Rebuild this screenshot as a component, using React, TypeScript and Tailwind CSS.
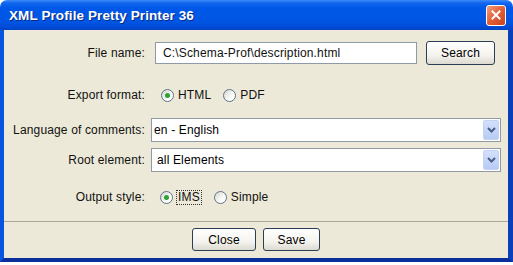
import React from "react";

const font = { fontFamily: '"Liberation Sans", Arial, sans-serif' };

function Radio({ checked }: { checked?: boolean }) {
  return (
    <span className="w-[13px] h-[13px] rounded-full border border-[#5f7489] bg-[linear-gradient(135deg,#d6d6cf,#ffffff_70%)] flex items-center justify-center shrink-0">
      {checked && <span className="w-[5px] h-[5px] rounded-full bg-[#2ea12e]" />}
    </span>
  );
}

function XPButton({ children, w }: { children: React.ReactNode; w: string }) {
  return (
    <div
      className={`${w} h-full rounded-[3px] border border-[#2c3e55] bg-[linear-gradient(to_bottom,#ffffff,#f4f3ee_60%,#dcdad0)] flex items-center justify-center text-[12px] text-black`}
    >
      {children}
    </div>
  );
}

function Combo({ text, pl }: { text: string; pl: string }) {
  return (
    <div className="w-[350px] h-[24px] border border-[#8f9aa6] bg-white flex items-center">
      <span className={`flex-1 ${pl} text-[12px] text-black`}>{text}</span>
      <div className="w-[16px] h-[20px] mr-[1px] rounded-[2px] bg-[linear-gradient(to_bottom,#d3e0fb,#b7cbf5)] border border-[#c4d3f2] flex items-center justify-center">
        <svg width="9" height="6" viewBox="0 0 9 6">
          <path d="M1 1 L4.5 4.5 L8 1" fill="none" stroke="#4a5e86" strokeWidth="2" />
        </svg>
      </div>
    </div>
  );
}

export default function App() {
  return (
    <div className="w-[513px] h-[265px] bg-white" style={font}>
      <div className="w-[513px] h-[262px] flex flex-col">
        {/* Title bar */}
        <div className="h-[30px] rounded-t-[7px] bg-[linear-gradient(to_bottom,#3d8cfa_0px,#1266ee_3px,#0058e8_8px,#0055e3_22px,#004bd6_27px,#0043c4_30px)] flex items-center justify-between pt-[3px] pl-[9px] pr-[7px]">
          <span
            className="text-white font-bold text-[13.5px] tracking-[0.1px]"
            style={{ textShadow: "1px 1px 0 #0a2a80" }}
          >
            XML Profile Pretty Printer 36
          </span>
          <div className="w-[20px] h-[21px] rounded-[3px] border border-white bg-[linear-gradient(135deg,#f0a07f,#e35d35_50%,#c8421e)] flex items-center justify-center mb-[3px]">
            <svg width="10" height="10" viewBox="0 0 10 10">
              <path d="M1.5 1.5 L8.5 8.5 M8.5 1.5 L1.5 8.5" stroke="white" strokeWidth="2" strokeLinecap="square" />
            </svg>
          </div>
        </div>
        {/* Body */}
        <div className="flex-1 flex border-l-[4px] border-r-[5px] border-b-[4px] border-l-[#0a55e0] border-r-[#0a3fb8] border-b-[#0a2f9c] bg-[#ece9d8]">
          <div className="flex-1 flex flex-col text-[12px] text-[#111] tracking-[0.15px]">
            {/* Row 1 */}
            <div className="flex items-center h-[24px] mt-[11px]">
              <span className="w-[141px] text-right">File name:</span>
              <div className="ml-[10px] w-[262px] h-[22px] border border-[#8f9aa6] bg-white flex items-center pl-[7px]">
                C:\Schema-Prof\description.html
              </div>
              <div className="ml-[9px] h-[24px]">
                <XPButton w="w-[69px]">Search</XPButton>
              </div>
            </div>
            {/* Row 2 */}
            <div className="flex items-center h-[24px] mt-[18px]">
              <span className="w-[141px] text-right">Export format:</span>
              <span className="ml-[16px]">
                <Radio checked />
              </span>
              <span className="ml-[4px]">HTML</span>
              <span className="ml-[12px]">
                <Radio />
              </span>
              <span className="ml-[4px]">PDF</span>
            </div>
            {/* Row 3 */}
            <div className="flex items-center h-[24px] mt-[11px]">
              <span className="w-[141px] text-right">Language of comments:</span>
              <div className="ml-[6px]">
                <Combo text="en - English" pl="pl-[2px]" />
              </div>
            </div>
            {/* Row 4 */}
            <div className="flex items-center h-[24px] mt-[6px]">
              <span className="w-[141px] text-right">Root element:</span>
              <div className="ml-[6px]">
                <Combo text="all Elements" pl="pl-[5px]" />
              </div>
            </div>
            {/* Row 5 */}
            <div className="flex items-center h-[24px] mt-[13px]">
              <span className="w-[141px] text-right">Output style:</span>
              <span className="ml-[15px]">
                <Radio checked />
              </span>
              <span className="ml-[3px] px-[1px] border border-dotted border-[#333] leading-[13px]">IMS</span>
              <span className="ml-[12px]">
                <Radio />
              </span>
              <span className="ml-[4px]">Simple</span>
            </div>
            {/* Separator */}
            <div className="mt-[12px] border-t border-[#aca899]" />
            <div className="flex justify-center gap-[7px] h-[23px] mt-[6px]">
              <XPButton w="w-[64px]">Close</XPButton>
              <XPButton w="w-[57px]">Save</XPButton>
            </div>
          </div>
        </div>
      </div>
    </div>
  );
}
